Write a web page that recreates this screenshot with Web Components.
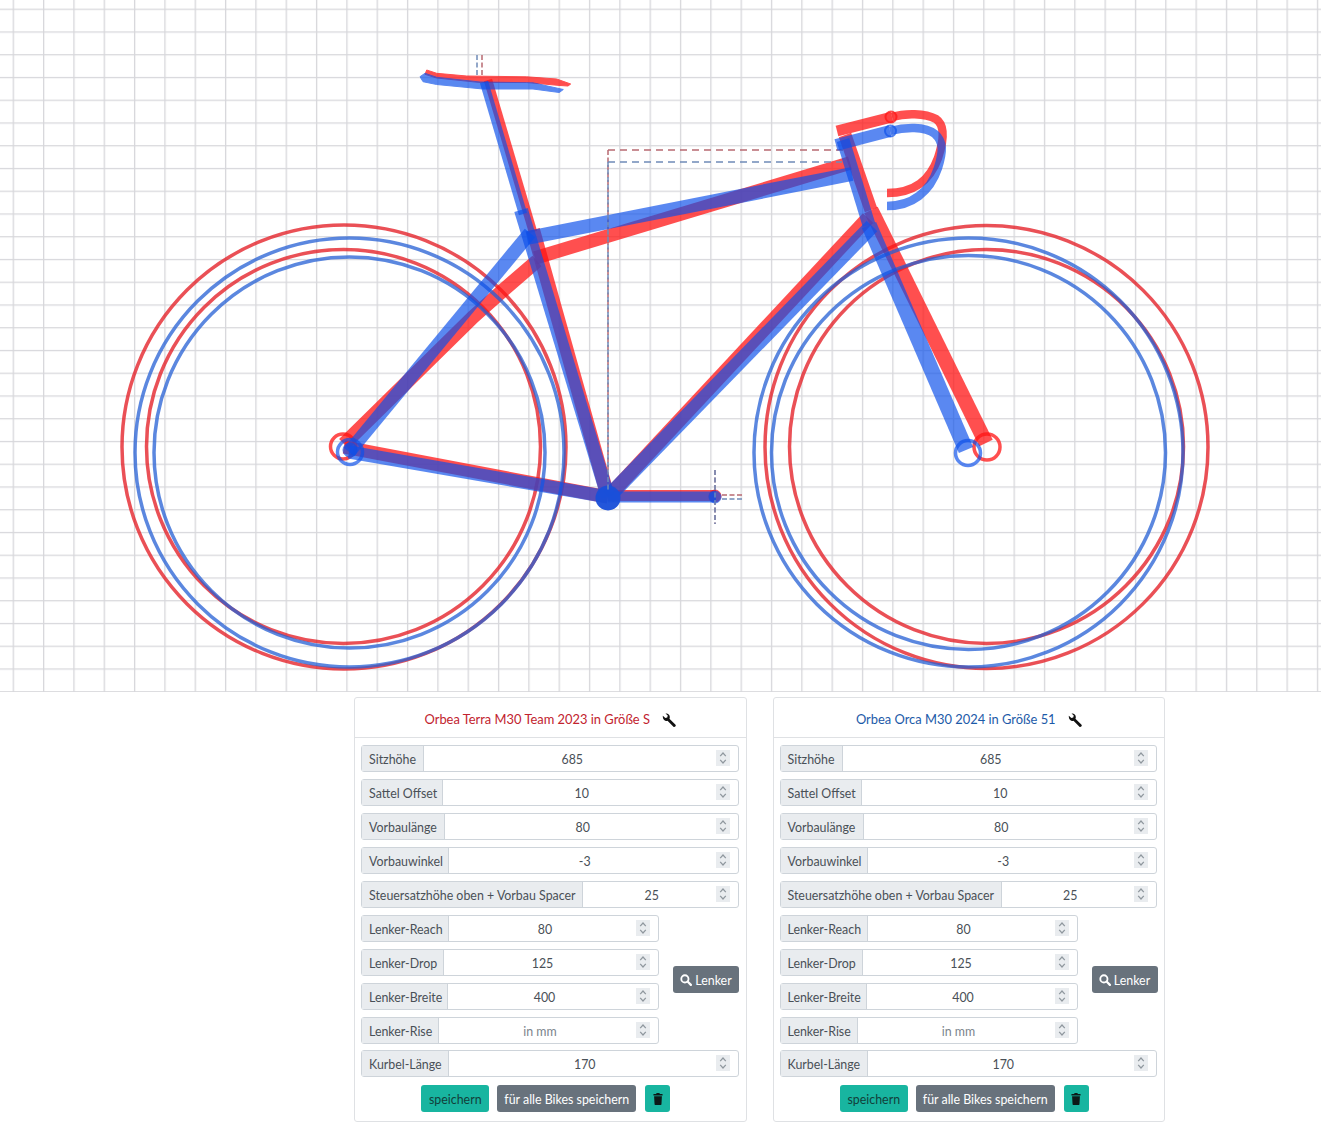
<!DOCTYPE html>
<html lang="de">
<head>
<meta charset="utf-8">
<title>Bike Vergleich</title>
<style>
  html, body { margin: 0; background: #fff; }
  body { font-family: Lato, "Noto Sans", sans-serif; font-size: 12.4px; color: #495057; }
  .cards { display: flex; gap: 26px; padding: 5px 0 0 354px; }
</style>
</head>
<body>
<bike-diagram></bike-diagram>
<div class="cards">
  <bike-card heading="Orbea Terra M30 Team 2023 in Größe S" color="#c2232e">
    <size-field value="685" w="62">Sitzhöhe</size-field>
    <size-field value="10" w="81">Sattel Offset</size-field>
    <size-field value="80" w="83">Vorbaulänge</size-field>
    <size-field value="-3" w="87">Vorbauwinkel</size-field>
    <size-field value="25" w="221">Steuersatzhöhe oben + Vorbau Spacer</size-field>
    <size-field slot="bar" value="80" w="87">Lenker-Reach</size-field>
    <size-field slot="bar" value="125" w="82">Lenker-Drop</size-field>
    <size-field slot="bar" value="400" w="86">Lenker-Breite</size-field>
    <size-field slot="bar" placeholder="in mm" w="77">Lenker-Rise</size-field>
    <size-field slot="last" value="170" w="87">Kurbel-Länge</size-field>
  </bike-card>
  <bike-card heading="Orbea Orca M30 2024 in Größe 51" color="#1c5aa8">
    <size-field value="685" w="62">Sitzhöhe</size-field>
    <size-field value="10" w="81">Sattel Offset</size-field>
    <size-field value="80" w="83">Vorbaulänge</size-field>
    <size-field value="-3" w="87">Vorbauwinkel</size-field>
    <size-field value="25" w="221">Steuersatzhöhe oben + Vorbau Spacer</size-field>
    <size-field slot="bar" value="80" w="87">Lenker-Reach</size-field>
    <size-field slot="bar" value="125" w="82">Lenker-Drop</size-field>
    <size-field slot="bar" value="400" w="86">Lenker-Breite</size-field>
    <size-field slot="bar" placeholder="in mm" w="77">Lenker-Rise</size-field>
    <size-field slot="last" value="170" w="87">Kurbel-Länge</size-field>
  </bike-card>
</div>

<script>
class BikeDiagram extends HTMLElement {
  constructor () {
    super()
    this.attachShadow({ mode: 'open' })
  }

  connectedCallback () {
    const red = `
      <circle class="wheel" cx="344" cy="447" r="222"/>
      <circle class="wheel" cx="343.5" cy="446.5" r="197"/>
      <circle class="wheel" cx="986.5" cy="447" r="221.5"/>
      <circle class="wheel" cx="986.5" cy="446.5" r="197"/>
      <path class="tube" stroke-width="13" d="M344 447 L608 497"/>
      <path class="tube" stroke-width="14" d="M344 444 L473 317 L500 293 L537 261"/>
      <path class="tube" stroke-width="13.500" d="M535 258 L850 163"/>
      <path class="tube" stroke-width="14" d="M533 230 L608 497"/>
      <path class="tube" stroke-width="8.500" d="M488 80 L533 232"/>
      <path class="fill" d="M426.700 70 L436.700 73.300 L466.700 76 L526.700 76.800 L556.700 79 L570.700 84 L568 86 L560 85.500 L526.700 82.500 L480 82.500 L436.700 78 L425 74.300 Z"/>
      <path class="tube" stroke-width="14" d="M608 497 L868 218"/>
      <path class="tube" stroke-width="13" d="M845 135 L871 210"/>
      <path class="tube" stroke-width="15" d="M871 210 L986 443"/>
      <path class="tube" stroke-width="11" d="M837 131 L892 117"/>
      <path class="tube" stroke-width="8.500" d="M892 117 C905 113 925 113 936 119 C945 125 944 140 938 158 C930 180 915 193 887 193"/>
      <path class="tube" stroke-width="11" d="M608 495.500 L716 495.500"/>
      <circle class="knob" cx="891" cy="117" r="5.500"/>
      <circle class="tube" stroke-width="3.500" cx="343" cy="446.500" r="12.500"/>
      <circle class="tube" stroke-width="3.500" cx="987" cy="447" r="13"/>
      <circle class="fill" cx="715" cy="496" r="6"/>
      <path class="dash long" d="M608 150 L846 150"/>
      <path class="dash" d="M482 55 L482 76 M608 150 L608 490 M715 470 L715 524 M722 495 L742 495"/>`
    const blue = `
      <circle class="wheel" cx="349.500" cy="452.500" r="214.500"/>
      <circle class="wheel" cx="349.500" cy="452.500" r="195.500"/>
      <circle class="wheel" cx="968.500" cy="452.500" r="214.500"/>
      <circle class="wheel" cx="968.500" cy="452.500" r="197"/>
      <path class="tube" stroke-width="13" d="M349 452 L608 497"/>
      <path class="tube" stroke-width="13.500" d="M349 452 L530 233"/>
      <path class="tube" stroke-width="14" d="M527 238 L852 174"/>
      <path class="tube" stroke-width="14" d="M521 210 L608 497"/>
      <path class="tube" stroke-width="8.500" d="M484 82 L523 214"/>
      <path class="fill" d="M420 76.700 L425 73.300 L436.700 77.300 L480 82 L533 82.800 L563.300 89.500 L559.300 92.500 L533 89 L483 89 L436.700 84.500 L423 81.700 Z"/>
      <path class="tube" stroke-width="15" d="M608 497 L872 226"/>
      <path class="tube" stroke-width="13" d="M843 140 L869 225"/>
      <path class="tube" stroke-width="15.500" d="M869 225 L966 450"/>
      <path class="tube" stroke-width="12" d="M836 145 L890 131"/>
      <path class="tube" stroke-width="8.500" d="M890 131 C905 127 925 126 935 134 C944 142 943 152 938 168 C930 192 912 206 887 206"/>
      <path class="tube" stroke-width="11" d="M608 497 L716 497"/>
      <circle class="knob" cx="890.500" cy="131" r="5.500"/>
      <circle class="tube" stroke-width="3.500" cx="350" cy="452" r="12.500"/>
      <circle class="tube" stroke-width="3.500" cx="968" cy="453" r="12.500"/>
      <circle class="fill" cx="350" cy="450" r="7"/>
      <circle class="fill" cx="715" cy="497" r="6"/>
      <circle class="hub" cx="608" cy="498" r="12.500"/>
      <path class="dash long" d="M608 162 L842 162"/>
      <path class="dash" d="M477 55 L477 76 M608 162 L608 490 M715 470 L715 524 M722 499 L742 499"/>`

    this.shadowRoot.innerHTML = `
    <style>
      :host { display: block; height: 692px; }
      svg { display: block; width: 100%; height: 100%; }
      .wheel { fill: none; stroke: var(--w); stroke-width: 3.500; opacity: .75; }
      .tube { fill: none; stroke: var(--c); opacity: var(--o); }
      .fill { fill: var(--c); stroke: var(--c); stroke-width: 1; stroke-linejoin: round; opacity: var(--o); }
      .knob { fill: var(--c); fill-opacity: .3; stroke: var(--c); stroke-width: 2; opacity: var(--o); }
      .hub { fill: #1a4fd8; opacity: .96; }
      .dash { fill: none; stroke: var(--d); stroke-width: 1.500; stroke-dasharray: 5 2.500; }
      .dash.long { stroke-dasharray: 7 5; }
      .red { --c: #ff1414; --o: .75; --w: #e3161e; --d: #b86a72; }
      .blue { --c: #0c50ea; --o: .68; --w: #245fd4; --d: #6f8bb8; }
    </style>
    <svg viewBox="0 0 1321 692" role="img" aria-label="Geometrie-Vergleich">
      <defs>
        <pattern id="grid" x="12.650" y="8.650" width="30.330" height="22.750" patternUnits="userSpaceOnUse">
          <path d="M0 0 L30.330 0 M0 0 L0 22.750" fill="none" stroke="#d7d7db" stroke-width="2.600"/>
        </pattern>
      </defs>
      <rect width="1321" height="692" fill="url(#grid)"/>
      <g class="red">${red}</g>
      <g class="blue">${blue}</g>
    </svg>`
  }
}

class SizeField extends HTMLElement {
  constructor () {
    super()
    this.attachShadow({ mode: 'open' })
  }

  connectedCallback () {
    const val = this.getAttribute('value')
    const text = val !== null ? val : this.getAttribute('placeholder')
    this.shadowRoot.innerHTML = `
    <style>
      :host { display: flex; height: 27px; box-sizing: border-box; border: 1px solid #ced4da; border-radius: 3px; background: #fff; color: #495057; font-size: 12.400px; }
      .label { box-sizing: border-box; width: ${this.getAttribute('w')}px; flex: none; display: flex; align-items: center; padding: 2px 0 0 7px; white-space: nowrap; background: #e9ecef; border-right: 1px solid #ced4da; }
      .value { flex: 1; margin-right: -5px; text-align: center; line-height: 28px; ${val === null ? 'color: #7b848c;' : ''} }
      .spin { flex: none; width: 14px; height: 16px; margin: 4px 8px 0 0; background: #e9ecef; }
      svg { display: block; }
    </style>
    <div class="label"><slot></slot></div>
    <div class="value">${text}</div>
    <div class="spin">
      <svg width="14" height="16" viewBox="0 0 14 16" fill="none" stroke="#8f979e" stroke-width="1.200">
        <path d="M4.200 6.200 L7 3 L9.800 6.200 M4.200 9.800 L7 13 L9.800 9.800"/>
      </svg>
    </div>`
  }
}

class UiButton extends HTMLElement {
  constructor () {
    super()
    this.attachShadow({ mode: 'open' })
  }

  connectedCallback () {
    const teal = this.getAttribute('tone') === 'teal'
    this.shadowRoot.innerHTML = `
    <style>
      :host { display: inline-flex; flex: none; align-items: center; justify-content: center; gap: 3px; box-sizing: border-box; height: 27px; padding-top: 1px; border-radius: 3px; font-size: 12.400px; white-space: nowrap;
        background: ${teal ? '#18b5a0' : '#68727c'}; color: ${teal ? '#123f3a' : '#fff'}; }
    </style>
    <slot></slot>`
  }
}

class BikeCard extends HTMLElement {
  constructor () {
    super()
    this.attachShadow({ mode: 'open' })
  }

  connectedCallback () {
    this.shadowRoot.innerHTML = `
    <style>
      :host { display: block; box-sizing: border-box; width: 392.500px; height: 425px; border: 1px solid #dfe1e4; border-radius: 3px; background: #fff; }
      header { box-sizing: border-box; height: 40px; border-bottom: 1px solid #dfe1e4; display: flex; align-items: center; justify-content: center; gap: 12px; color: ${this.getAttribute('color')}; font-size: 12.900px; padding-top: 2px; }
      header svg { margin-top: 2px; }
      .body { display: flex; flex-direction: column; gap: 7px; padding: 7px 7px 0 6px; }
      .bar { display: flex; align-items: center; gap: 14px; }
      .bar-fields { display: flex; flex-direction: column; gap: 7px; width: 298px; flex: none; }
      .last { margin-top: -1px; }
      .actions { display: flex; justify-content: center; gap: 8px; margin-top: 1px; padding-right: 8px; }
      .lenker { width: 66px; }
      .save { width: 68px; }
      .all { width: 139px; }
      .del { width: 25px; margin-left: 1px; }
      svg { display: block; }
    </style>
    <header>
      <span>${this.getAttribute('heading')}</span>
      <svg width="14" height="14" viewBox="0 0 16 16" fill="#111"><path d="M1 3.200 L3.800 5.800 L6 5 L6.600 2.800 L4 .600 C6.500 0 9.200 2 8.900 5 C8.900 5.500 8.700 6 8.500 6.500 L15.200 13 A1.600 1.600 0 0 1 12.800 15.300 L6.300 8.900 C3.500 9.900 .300 7 1 3.200 Z"/></svg>
    </header>
    <div class="body">
      <slot></slot>
      <div class="bar">
        <div class="bar-fields"><slot name="bar"></slot></div>
        <ui-button class="lenker">
          <svg width="12" height="12" viewBox="0 0 13 13" fill="none" stroke="#fff"><circle cx="5.300" cy="5.300" r="3.900" stroke-width="2"/><path d="M8.200 8.200 L11.800 11.800" stroke-width="2.400" stroke-linecap="round"/></svg>
          Lenker
        </ui-button>
      </div>
      <div class="last"><slot name="last"></slot></div>
      <div class="actions">
        <ui-button class="save" tone="teal">speichern</ui-button>
        <ui-button class="all">für alle Bikes speichern</ui-button>
        <ui-button class="del" tone="teal">
          <svg width="10" height="12" viewBox="0 0 11 13" fill="#0c1a18"><path d="M4 0 H7 L7.600 1 H10.500 V2.600 H.500 V1 H3.400 Z M1.200 3.400 H9.800 L9.300 12.200 C9.300 12.700 9 13 8.500 13 H2.500 C2 13 1.700 12.700 1.700 12.200 Z"/></svg>
        </ui-button>
      </div>
    </div>`
  }
}

customElements.define('bike-diagram', BikeDiagram)
customElements.define('size-field', SizeField)
customElements.define('ui-button', UiButton)
customElements.define('bike-card', BikeCard)
</script>
</body>
</html>
